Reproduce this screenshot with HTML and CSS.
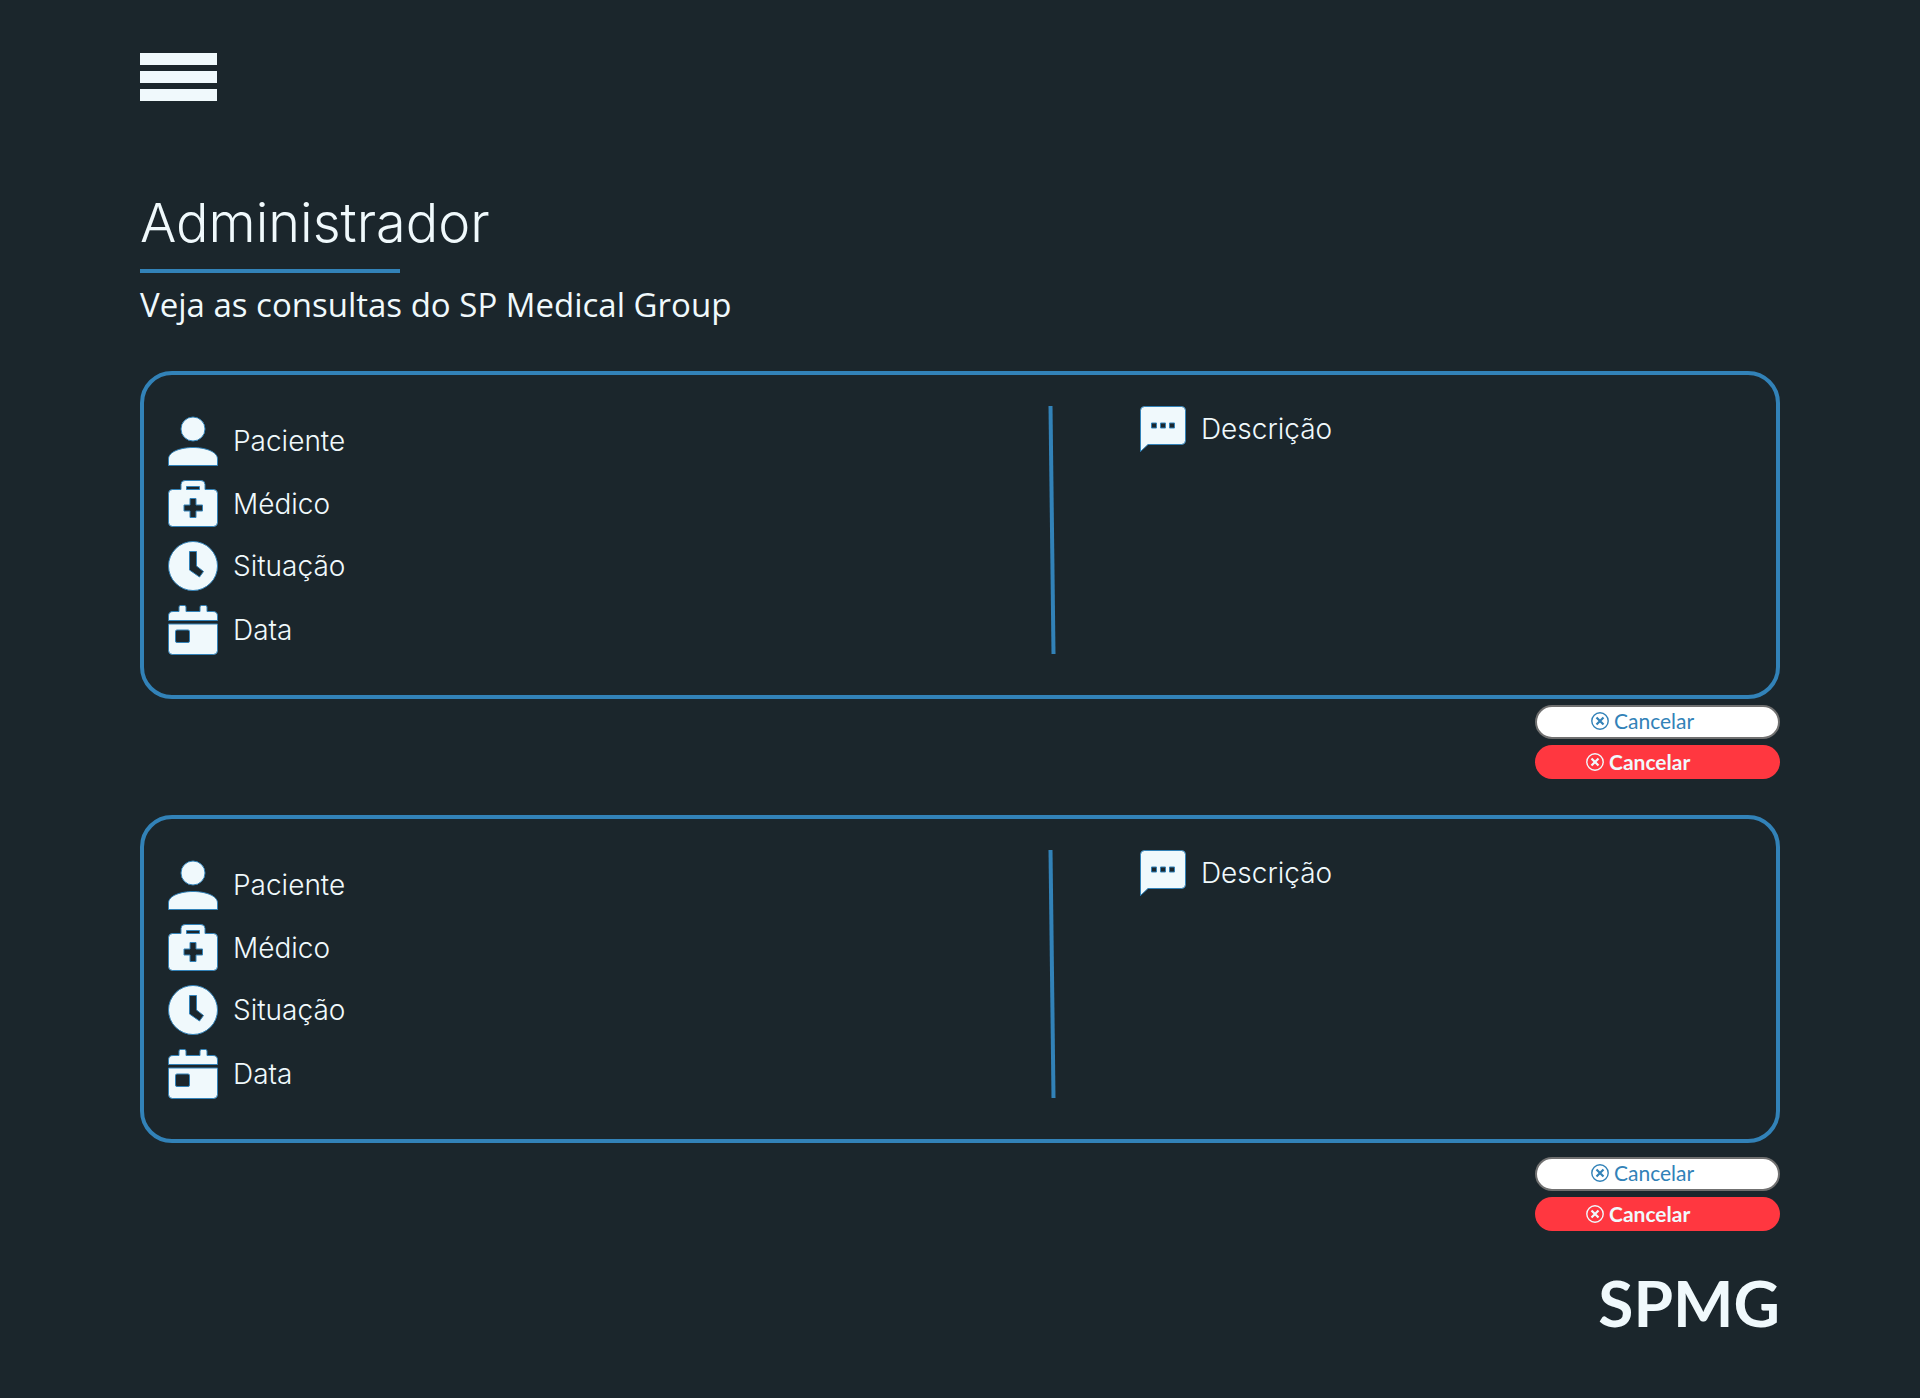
FILE: index.html
```html
<!DOCTYPE html>
<html lang="pt-BR">
<head>
<meta charset="utf-8">
<meta name="viewport" content="width=device-width, initial-scale=1">
<title>SP Medical Group - Administrador</title>
<link rel="stylesheet" href="styles.css">
</head>
<body>
<svg class="sprite" aria-hidden="true">
  <symbol id="i-person" viewBox="0 0 50 50">
    <circle cx="25" cy="13" r="12"/>
    <path d="M.5 49.500V43C.5 35.500 13 31.500 25 31.500S49.500 35.500 49.500 43V49.500Z"/>
  </symbol>
  <symbol id="i-bag" viewBox="0 0 50 47">
    <path fill-rule="evenodd" d="M13 9.500V4.500Q13 .5 17 .5H33Q37 .5 37 4.500V9.500H45.500Q49.500 9.500 49.500 13.500V42.500Q49.500 46.500 45.500 46.500H4.500Q.5 46.500 .5 42.500V13.500Q.5 9.500 4.500 9.500ZM18.500 6.500V9.500H31.500V6.500ZM22 18.500V25H16V31H22V37.500H28V31H34.500V25H28V18.500Z"/>
  </symbol>
  <symbol id="i-clock" viewBox="0 0 50 50">
    <path fill-rule="evenodd" d="M25 .5A24.500 24.500 0 1 1 25 49.500A24.500 24.500 0 1 1 25 .5ZM21.500 10.500V29L31.500 36L35.500 30.500L28.500 25V10.500Z"/>
  </symbol>
  <symbol id="i-calendar" viewBox="0 0 50 50">
    <path d="M.5 15.500V11Q.5 6.500 5 6.500H11V2Q11 .5 12.500 .5H16.500Q18 .5 18 2V6.500H32V2Q32 .5 33.500 .5H37.500Q39 .5 39 2V6.500H45Q49.500 6.500 49.500 11V15.500Z"/>
    <path fill-rule="evenodd" d="M.5 19H49.500V45.500Q49.500 49.500 45.500 49.500H4.500Q.5 49.500 .5 45.500ZM9 25Q7.500 25 7.500 26.500V36Q7.500 37.500 9 37.500H20Q21.500 37.500 21.500 36V26.500Q21.500 25 20 25Z"/>
  </symbol>
  <symbol id="i-message" viewBox="0 0 46 46">
    <path fill-rule="evenodd" d="M4.500 .5H41.500Q45.500 .5 45.500 4.500V34.500Q45.500 38.500 41.500 38.500H8L.5 45.500V4.500Q.5 .5 4.500 .5ZM11.500 17V22H16.500V17ZM20.500 17V22H25.500V17ZM29.500 17V22H34.500V17Z"/>
  </symbol>
  <symbol id="i-cancel" viewBox="0 0 18 18">
    <circle cx="9" cy="9" r="8.200" fill="none" stroke="currentColor" stroke-width="1.400"/>
    <path d="M5.500 5.500L12.500 12.500M12.500 5.500L5.500 12.500" fill="none" stroke="currentColor" stroke-width="2.200"/>
  </symbol>
</svg>

<div class="page">
  <header>
    <button class="menu" type="button" aria-label="Menu"><span></span><span></span><span></span></button>
  </header>
  <main>
    <h1 class="title">Administrador</h1>
    <p class="subtitle">Veja as consultas do SP Medical Group</p>

    <section class="appointment">
      <div class="card">
        <ul class="fields">
          <li class="field"><svg class="icon" width="50" height="50"><use href="#i-person"/></svg>Paciente</li>
          <li class="field"><svg class="icon" width="50" height="47"><use href="#i-bag"/></svg>Médico</li>
          <li class="field"><svg class="icon" width="50" height="50"><use href="#i-clock"/></svg>Situação</li>
          <li class="field"><svg class="icon" width="50" height="50"><use href="#i-calendar"/></svg>Data</li>
        </ul>
        <svg class="divider" viewBox="0 0 8 248" preserveAspectRatio="none"><path d="M2.500 0L5.500 248"/></svg>
        <div class="field description"><svg class="icon" width="46" height="46"><use href="#i-message"/></svg>Descrição</div>
      </div>
      <div class="actions">
        <button class="btn btn-light" type="button"><svg width="18" height="18"><use href="#i-cancel"/></svg>Cancelar</button>
        <button class="btn btn-danger" type="button"><svg width="18" height="18"><use href="#i-cancel"/></svg>Cancelar</button>
      </div>
    </section>

    <section class="appointment appointment-last">
      <div class="card">
        <ul class="fields">
          <li class="field"><svg class="icon" width="50" height="50"><use href="#i-person"/></svg>Paciente</li>
          <li class="field"><svg class="icon" width="50" height="47"><use href="#i-bag"/></svg>Médico</li>
          <li class="field"><svg class="icon" width="50" height="50"><use href="#i-clock"/></svg>Situação</li>
          <li class="field"><svg class="icon" width="50" height="50"><use href="#i-calendar"/></svg>Data</li>
        </ul>
        <svg class="divider" viewBox="0 0 8 248" preserveAspectRatio="none"><path d="M2.500 0L5.500 248"/></svg>
        <div class="field description"><svg class="icon" width="46" height="46"><use href="#i-message"/></svg>Descrição</div>
      </div>
      <div class="actions">
        <button class="btn btn-light" type="button"><svg width="18" height="18"><use href="#i-cancel"/></svg>Cancelar</button>
        <button class="btn btn-danger" type="button"><svg width="18" height="18"><use href="#i-cancel"/></svg>Cancelar</button>
      </div>
    </section>
  </main>
  <footer class="footer">SPMG</footer>
</div>
</body>
</html>
```

FILE: styles.css
```css
:root {
  --bg: #1b262c;
  --ink: #f0f9fc;
  --blue: #3282b8;
  --red: #ff3740;
}

* {
  box-sizing: border-box;
}

body {
  margin: 0;
  background: var(--bg);
  color: var(--ink);
  font-family: "Open Sans", "Noto Sans", sans-serif;
}

.sprite {
  display: none;
}

.page {
  padding: 53px 140px 56px;
}

.menu {
  display: flex;
  flex-direction: column;
  gap: 6px;
  width: 77px;
  padding: 0;
  border: 0;
  background: none;
  cursor: pointer;
}

.menu span {
  height: 12px;
  width: 100%;
  background: var(--ink);
}

.title {
  margin: 86px 0 0;
  font-family: Inter, "Open Sans", sans-serif;
  font-size: 54px;
  font-weight: 300;
  line-height: 72px;
}

.title::after {
  content: "";
  display: block;
  width: 260px;
  height: 4px;
  margin-top: 10px;
  background: var(--blue);
}

.subtitle {
  margin: 8px 0 42px;
  font-size: 33px;
  line-height: 48px;
}

.card {
  display: grid;
  grid-template-columns: 67fr 8px 53fr;
  align-items: start;
  padding: 31px 24px 40px;
  border: 4px solid var(--blue);
  border-radius: 32px;
}

.fields {
  display: flex;
  flex-direction: column;
  gap: 14px;
  margin: 10px 0 0;
  padding: 0;
  list-style: none;
}

.field {
  display: flex;
  align-items: center;
  gap: 15px;
  font-family: Inter, "Open Sans", sans-serif;
  font-size: 28px;
  font-weight: 300;
  line-height: 36px;
}

.description {
  margin-left: 84px;
}

.icon {
  fill: var(--ink);
  stroke: var(--blue);
  stroke-width: 1px;
}

.divider {
  width: 8px;
  height: 248px;
  stroke: var(--blue);
  stroke-width: 4px;
}

.actions {
  display: flex;
  flex-direction: column;
  align-items: flex-end;
  gap: 6px;
  margin: 6px 0 36px;
}

.appointment-last .actions {
  margin-top: 14px;
}

.btn {
  display: flex;
  align-items: center;
  gap: 5px;
  width: 245px;
  height: 34px;
  border: 0;
  border-radius: 17px;
  font-family: Lato, "Open Sans", sans-serif;
  font-size: 21px;
  line-height: 24px;
  cursor: pointer;
}

.btn-light {
  padding: 0 54px 2px;
  border: 2px solid #707070;
  background: #fff;
  color: var(--blue);
}

.btn-danger {
  padding: 0 51px;
  background: var(--red);
  color: var(--ink);
  font-weight: 700;
}

.footer {
  font-family: Lato, "Open Sans", sans-serif;
  font-size: 64px;
  font-weight: 700;
  line-height: 72px;
  text-align: right;
}
```
